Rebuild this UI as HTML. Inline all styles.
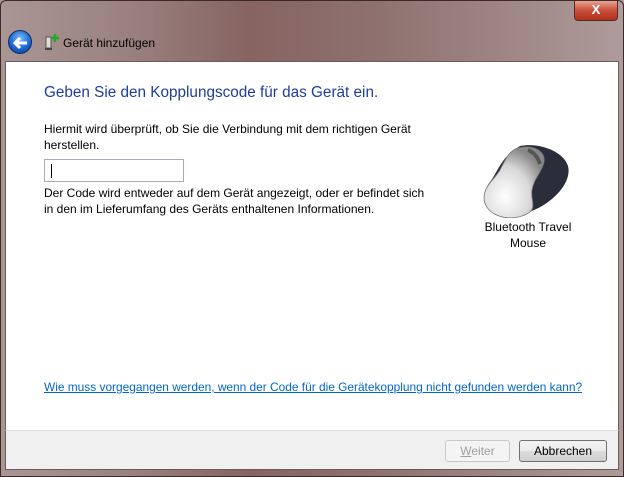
<!DOCTYPE html><html><head><meta charset="utf-8"><style>
*{margin:0;padding:0;box-sizing:border-box}
body{width:624px;height:477px;overflow:hidden;font-family:"Liberation Sans",sans-serif;font-size:12px;color:#000;
background:linear-gradient(90deg,#a99694 0%,#9a8280 20%,#866462 40%,#8e716f 60%,#9d8583 80%,#ad9c9a 100%);position:relative}
.frame{position:absolute;left:0;top:0;width:624px;height:477px;border:1px solid #3b2a29;border-radius:6px 6px 0 0}
.close{position:absolute;left:574px;top:1px;width:44px;height:20px;border:1px solid #5a2a22;border-top:none;border-radius:0 0 4px 4px;background:linear-gradient(#e8a090,#c8503a 50%,#b03020);color:#fff;font-weight:bold;text-align:center;font-size:13px;line-height:18px}
.back{position:absolute;left:8px;top:30px;width:24px;height:24px;border-radius:50%;background:radial-gradient(circle at 50% 35%,#7ac0ff,#1a60c8 60%,#0a3a90);border:1px solid #0a3070}
.title{position:absolute;left:63px;top:36px;font-size:12px;color:#000}
.white{position:absolute;left:5px;top:61px;width:614px;height:369px;background:#fff;border:1px solid #6d5a59;border-bottom:none}
.bar{position:absolute;left:5px;top:430px;width:614px;height:40px;background:#f0f0f0;border-top:1px solid #dfdfdf;border-left:1px solid #6d5a59;border-right:1px solid #6d5a59;border-bottom:1px solid #6d5a59}
.h{position:absolute;left:44px;top:84px;font-size:15.3px;color:#1e3d9a}
.t{position:absolute;left:44px;font-size:12px;line-height:16px}
.inp{position:absolute;left:44px;top:159px;width:140px;height:23px;border:1px solid #aab;background:#fff}
.inp i{position:absolute;left:6px;top:4px;width:1px;height:14px;background:#000}
.link{position:absolute;left:44px;top:380px;color:#0066cc;text-decoration:underline;font-size:11.9px}
.btn{position:absolute;top:440px;height:22px;border:1px solid #707070;border-radius:3px;background:linear-gradient(#f2f2f2,#ebebeb 50%,#dddddd 51%,#cfcfcf);text-align:center;line-height:20px;font-size:12px}
</style></head><body>
<div class="frame"></div>
<div class="close">X</div>
<div class="back"><svg width="24" height="24" viewBox="0 0 24 24"><path d="M6 12h12M11 7l-5 5 5 5" stroke="#fff" stroke-width="3" fill="none"/></svg></div>
<svg style="position:absolute;left:44px;top:33px" width="16" height="18"><rect x="2" y="4" width="5" height="11" fill="#ddd" stroke="#555"/><rect x="1" y="15" width="7" height="2" fill="#444"/><path d="M11 1v8M7 5h8" stroke="#2a2" stroke-width="2.5"/></svg>
<div class="title">Gerät hinzufügen</div>
<div class="white"></div>
<div class="bar"></div>
<div class="h">Geben Sie den Kopplungscode für das Gerät ein.</div>
<div class="t" style="top:121px">Hiermit wird überprüft, ob Sie die Verbindung mit dem richtigen Gerät<br>herstellen.</div>
<div class="inp"><i></i></div>
<div class="t" style="top:185px">Der Code wird entweder auf dem Gerät angezeigt, oder er befindet sich<br>in den im Lieferumfang des Geräts enthaltenen Informationen.</div>
<svg style="position:absolute;left:480px;top:142px" width="92" height="76" viewBox="0 0 92 76">
<defs><radialGradient id="g" cx="35%" cy="70%" r="70%"><stop offset="0" stop-color="#fff"/><stop offset=".6" stop-color="#d8d8d8"/><stop offset="1" stop-color="#888"/></radialGradient></defs>
<path d="M40 4C60 0 84 10 88 24c3 12-6 26-20 36C52 72 28 78 12 70 2 64 2 50 10 40 18 30 20 16 40 4z" fill="#2a2d3a"/>
<path d="M38 6C54 2 66 10 64 20c-2 10-10 16-12 28-2 12 8 20-10 26C22 80 4 70 4 56 4 44 14 38 20 28 26 16 30 8 38 6z" fill="url(#g)" stroke="#777" stroke-width=".8"/>
<path d="M48 8c6 2 10 8 12 14" stroke="#555" stroke-width="4" fill="none"/>
</svg>
<div style="position:absolute;left:470px;top:219px;width:116px;text-align:center;line-height:16px">Bluetooth Travel<br>Mouse</div>
<div class="link">Wie muss vorgegangen werden, wenn der Code für die Gerätekopplung nicht gefunden werden kann?</div>
<div class="btn" style="left:445px;width:65px;color:#a0a0a0;border-color:#c8c8c8;background:#f4f4f4"><u>W</u>eiter</div>
<div class="btn" style="left:519px;width:88px">Abbrechen</div>
</body></html>
